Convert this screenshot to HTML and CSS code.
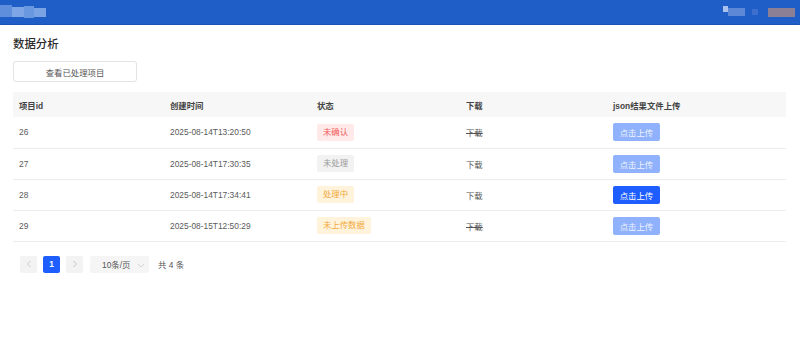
FILE: index.html
```html
<!DOCTYPE html>
<html lang="zh">
<head>
<meta charset="utf-8">
<link rel="stylesheet" href="styles.css">
</head>
<body>
<header class="topbar">
  <div class="logo">
    <span class="px p1"></span><span class="px p2"></span><span class="px p3"></span><span class="px p4"></span>
  </div>
  <div class="user">
    <span class="px u1"></span><span class="px u2"></span><span class="px u3"></span><span class="px u4"></span>
  </div>
</header>
<main class="content">
  <h1 class="title">数据分析</h1>
  <button class="btn-outline">查看已处理项目</button>
  <table class="grid">
    <colgroup>
      <col class="c1"><col class="c2"><col class="c3"><col class="c4"><col class="c5">
    </colgroup>
    <thead>
      <tr><th>项目id</th><th>创建时间</th><th>状态</th><th>下载</th><th>json结果文件上传</th></tr>
    </thead>
    <tbody>
      <tr>
        <td>26</td><td>2025-08-14T13:20:50</td>
        <td><span class="tag tag-red">未确认</span></td>
        <td><span class="dl dl-off">下载</span></td>
        <td><button class="upload upload-off">点击上传</button></td>
      </tr>
      <tr>
        <td>27</td><td>2025-08-14T17:30:35</td>
        <td><span class="tag tag-gray">未处理</span></td>
        <td><span class="dl">下载</span></td>
        <td><button class="upload upload-off">点击上传</button></td>
      </tr>
      <tr>
        <td>28</td><td>2025-08-14T17:34:41</td>
        <td><span class="tag tag-yellow">处理中</span></td>
        <td><span class="dl">下载</span></td>
        <td><button class="upload">点击上传</button></td>
      </tr>
      <tr>
        <td>29</td><td>2025-08-15T12:50:29</td>
        <td><span class="tag tag-yellow">未上传数据</span></td>
        <td><span class="dl dl-off">下载</span></td>
        <td><button class="upload upload-off">点击上传</button></td>
      </tr>
    </tbody>
  </table>
  <nav class="pager">
    <span class="pg pg-arrow">
      <svg width="6" height="8" viewBox="0 0 6 8"><path d="M4.5 1 L1.5 4 L4.5 7" fill="none" stroke="#c4c4c4" stroke-width="0.9"/></svg>
    </span>
    <span class="pg pg-on">1</span>
    <span class="pg pg-arrow">
      <svg width="6" height="8" viewBox="0 0 6 8"><path d="M1.5 1 L4.5 4 L1.5 7" fill="none" stroke="#bdbdbd" stroke-width="0.9"/></svg>
    </span>
    <span class="size">10条/页
      <svg class="caret" width="8" height="5" viewBox="0 0 8 5"><path d="M1 1 L4 4 L7 1" fill="none" stroke="#c8c8c8" stroke-width="0.8"/></svg>
    </span>
    <span class="total">共 4 条</span>
  </nav>
</main>
</body>
</html>
```

FILE: styles.css
```css
* { box-sizing: border-box; }
html, body { margin: 0; padding: 0; background: #fff; }
body {
  font-family: "Liberation Sans", Arial, "Noto Sans CJK SC", sans-serif;
  font-size: 8.4px;
  color: #5b5b5b;
}
.topbar {
  height: 25px;
  background: #1f5dc7;
  border-bottom: 1px solid #1b52b4;
  display: flex;
  justify-content: space-between;
  align-items: center;
  padding: 0 5px 0 0;
}
.logo, .user { display: flex; align-items: center; height: 100%; }
.px { display: inline-block; }
.p1 { width: 12px; height: 12px; background: #5f8fdc; margin-top: -2px; }
.p2 { width: 12px; height: 10px; background: #7ea6e6; }
.p3 { width: 10px; height: 12px; background: #6a98e0; }
.p4 { width: 12px; height: 9px; background: #7aa3e4; }
.u1 { width: 5px; height: 6px; background: #a9c1ee; margin-top: -6px; }
.u2 { width: 17px; height: 8px; background: #5c88d6; }
.u3 { width: 6px; height: 6px; background: #3c6fce; margin-left: 7px; }
.u4 { width: 27px; height: 9px; background: #8a7f95; margin-left: 10px; }

.content { padding: 10px 14px 20px 13px; }
.title {
  margin: 0;
  font-size: 11.4px;
  font-weight: 500;
  color: #2b2b2b;
  line-height: 18px;
}
.btn-outline {
  margin-top: 8px;
  width: 124px;
  height: 21px;
  background: #fff;
  border: 1px solid #e3e3e3;
  border-radius: 3px;
  font: inherit;
  color: #555;
  padding: 0;
}
.grid {
  margin-top: 10px;
  width: 773px;
  border-collapse: collapse;
  table-layout: fixed;
}
.c1 { width: 151px; }
.c2 { width: 147px; }
.c3 { width: 149px; }
.c4 { width: 147px; }
.c5 { width: 179px; }
.grid th {
  background: #f7f7f7;
  height: 25px;
  text-align: left;
  font-weight: 600;
  color: #444;
  padding: 0 6px;
}
.grid td {
  height: 31px;
  padding: 0 6px;
  border-bottom: 1px solid #ededed;
  color: #5a5a5a;
}
.tag {
  display: inline-block;
  height: 17px;
  line-height: 17px;
  padding: 0 6px;
  border-radius: 2px;
}
.tag-red { background: #ffe9e9; color: #f25b5b; }
.tag-gray { background: #f2f2f2; color: #9a9a9a; }
.tag-yellow { background: #fff3dc; color: #f2a93b; }
.dl { color: #555; }
.dl-off { text-decoration: line-through; }
.upload {
  width: 47px;
  height: 18px;
  border: none;
  border-radius: 2px;
  background: #1e5eff;
  color: #fff;
  font: inherit;
  padding: 0;
}
.upload-off { background: #90b1fb; color: #eef3ff; }

.pager {
  margin-top: 14px;
  margin-left: 7px;
  display: flex;
  align-items: center;
  height: 17px;
}
.pg {
  width: 17px;
  height: 17px;
  display: flex;
  align-items: center;
  justify-content: center;
  border-radius: 2px;
  margin-right: 6px;
}
.pg-arrow { background: #f3f3f3; }
.pg-on { background: #1e5eff; color: #fff; font-weight: 600; }
.size {
  margin-left: 1px;
  width: 59px;
  height: 17px;
  background: #f5f5f5;
  border-radius: 2px;
  display: flex;
  align-items: center;
  padding-left: 12px;
  color: #555;
  position: relative;
}
.caret { position: absolute; right: 4px; top: 7px; }
.total { margin-left: 9px; color: #555; }
```
